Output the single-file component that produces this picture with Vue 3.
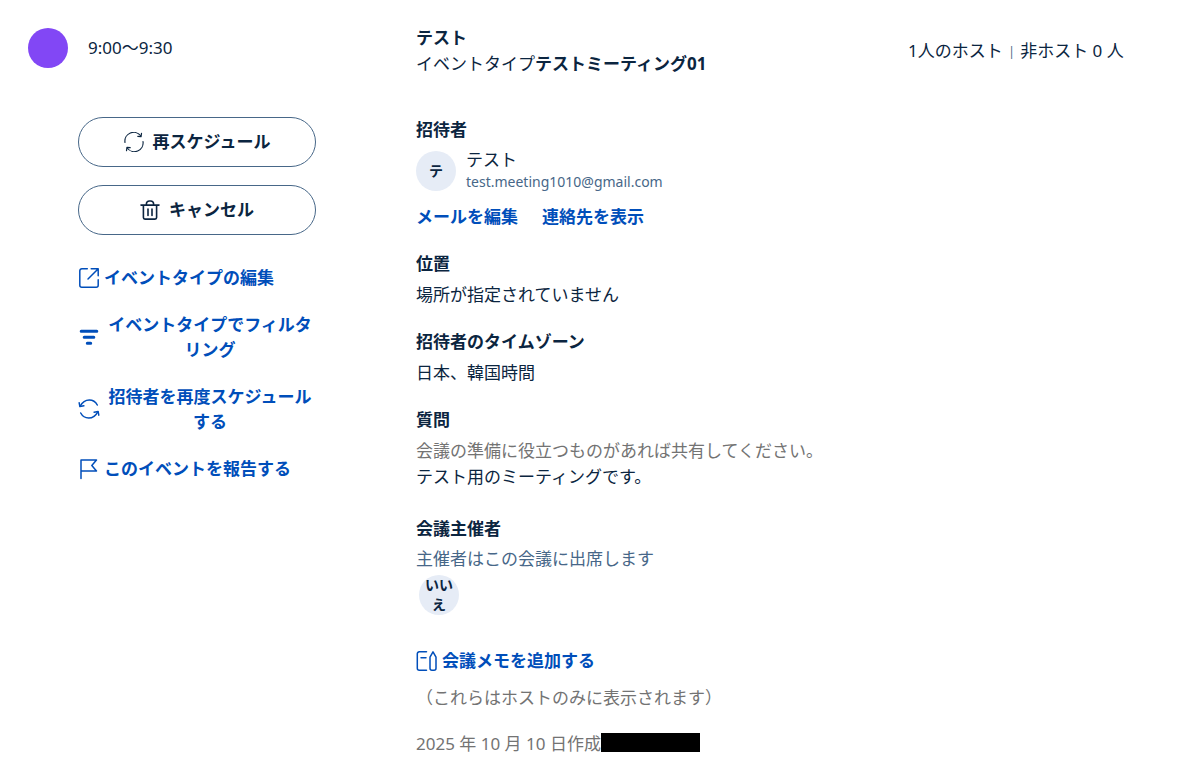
<script setup>
const sections = [
  { title: '位置', lines: [{ text: '場所が指定されていません' }] },
  { title: '招待者のタイムゾーン', lines: [{ text: '日本、韓国時間' }] },
  {
    title: '質問',
    lines: [
      { text: '会議の準備に役立つものがあれば共有してください。', muted: true },
      { text: 'テスト用のミーティングです。' },
    ],
  },
]
</script>

<template>
  <main class="event">
    <header class="grid summary">
      <div class="time">
        <span class="dot"></span>
        <time>9:00～9:30</time>
      </div>
      <div class="title">
        <strong>テスト</strong>
        <div>イベントタイプ<strong>テストミーティング01</strong></div>
      </div>
      <div class="hosts">1人のホスト <span class="bar">|</span> 非ホスト 0 人</div>
    </header>

    <div class="grid">
      <aside class="actions">
        <button class="pill" type="button">
          <svg class="icon-small" viewBox="0 0 20 20" aria-hidden="true">
            <path d="M1 10.500A8.800 8.800 0 0 1 16.800 4M19 9.500A8.800 8.800 0 0 1 3.200 16" />
            <path d="M17.500 1.400l-.5 3.200-3.200-.3M2.500 18.600l.5-3.200 3.200.3" />
          </svg>
          再スケジュール
        </button>
        <button class="pill" type="button">
          <svg class="icon-small trash" viewBox="0 0 20 20" aria-hidden="true">
            <path d="M1 5.1h18M3.4 5.1v12.400a1.600 1.600 0 0 0 1.600 1.600h10a1.600 1.600 0 0 0 1.600-1.600V5.100M6.400 5V3.800A3 3 0 0 1 9.400 1h1.200a3 3 0 0 1 3 2.800V5M8 9v6.500M12 9v6.500" />
          </svg>
          キャンセル
        </button>

        <div class="links">
          <button class="link" type="button">
            <svg viewBox="0 0 22 22" aria-hidden="true">
              <path d="M9.300 1.800H3.800a2 2 0 0 0-2 2v14.400a2 2 0 0 0 2 2h14.400a2 2 0 0 0 2-2v-5.500M10 12l10-10M13.200 1.800h7v7" />
            </svg>
            <span>イベントタイプの編集</span>
          </button>
          <button class="link" type="button">
            <svg class="filter" viewBox="0 0 22 22" aria-hidden="true">
              <path d="M3.200 5.300h15.600M6.200 11.300h9.600M9.300 17.300h3.400" />
            </svg>
            <span>イベントタイプでフィルタリング</span>
          </button>
          <button class="link" type="button">
            <svg viewBox="0 0 22 22" aria-hidden="true">
              <path d="M2.200 8.200C4.400 4 8 2 11.300 2c3.600 0 6.400 2 8 5M19.800 13.800C17.600 18 14 20 10.700 20c-3.600 0-6.400-2-8-5" />
              <path d="M1.200 4.800l.7 3.800 4-.8M20.800 17.200l-.7-3.800-4 .8" />
            </svg>
            <span>招待者を再度スケジュールする</span>
          </button>
          <button class="link" type="button">
            <svg viewBox="0 0 22 22" aria-hidden="true">
              <path d="M3 20.500V2h15.500l-4.700 5.500 4.700 5.500H3" />
            </svg>
            <span>このイベントを報告する</span>
          </button>
        </div>
      </aside>

      <div class="details">
        <section>
          <h2>招待者</h2>
          <div class="invitee">
            <span class="avatar">テ</span>
            <div>
              <div class="name">テスト</div>
              <div class="email">test.meeting1010@gmail.com</div>
            </div>
          </div>
          <div class="invitee-links">
            <button class="link" type="button">メールを編集</button>
            <button class="link" type="button">連絡先を表示</button>
          </div>
        </section>

        <section v-for="section in sections" :key="section.title">
          <h2>{{ section.title }}</h2>
          <div class="body">
            <p v-for="line in section.lines" :key="line.text" :class="{ muted: line.muted }">{{ line.text }}</p>
          </div>
        </section>

        <section class="organizer">
          <h2>会議主催者</h2>
          <p>主催者はこの会議に出席します</p>
          <span class="avatar">いいえ</span>
        </section>

        <section class="notes">
          <button class="link" type="button">
            <svg viewBox="0 0 22 22" aria-hidden="true">
              <path d="M10.500 1.800H3.300a2 2 0 0 0-2 2v14.400a2 2 0 0 0 2 2h7.200M5 7.700h5M14 7.200l3-5.400 3 5.400v11a2 2 0 0 1-2 2h-2a2 2 0 0 1-2-2z" />
            </svg>
            <span>会議メモを追加する</span>
          </button>
          <p class="muted">（これらはホストのみに表示されます）</p>
        </section>

        <p class="created muted">2025 年 10 月 10 日作成<span class="redacted"></span></p>
      </div>
    </div>
  </main>
</template>

<style>
body {
  margin: 0;
  background: #fff;
}
</style>

<style scoped>
.event {
  padding: 25px 28px;
  color: #0b2540;
  font-family: "Noto Sans", "Noto Sans CJK JP", sans-serif;
  font-size: 17px;
  line-height: 26px;
}
.grid {
  display: grid;
  grid-template-columns: 97fr 123fr 64fr;
}
.summary {
  margin-bottom: 40px;
}
.time {
  display: flex;
  align-items: center;
  align-self: start;
  gap: 20px;
  padding-top: 3px;
}
.dot {
  width: 40px;
  height: 40px;
  border-radius: 50%;
  background: #8247f5;
}
.hosts {
  padding-top: 13px;
  white-space: nowrap;
}
.bar {
  margin: 0 1px;
  color: #476788;
  font-size: 12px;
  line-height: 12px;
  vertical-align: 1px;
}
.actions {
  width: 238px;
  margin-left: 50px;
}
button {
  font: inherit;
  font-weight: 700;
  cursor: pointer;
}
svg {
  flex: none;
  width: 22px;
  height: 22px;
  fill: none;
  stroke: currentColor;
  stroke-width: 1.5;
  stroke-linecap: round;
  stroke-linejoin: round;
}
.pill {
  display: flex;
  align-items: center;
  justify-content: center;
  gap: 9px;
  width: 100%;
  height: 50px;
  margin-bottom: 18px;
  padding: 0;
  border: 1px solid #476788;
  border-radius: 25px;
  background: #fff;
  color: inherit;
}
.icon-small {
  width: 20px;
  height: 20px;
  stroke-width: 1.2;
}
.trash {
  stroke-width: 1.6;
}
.filter {
  stroke-width: 3;
}
.links {
  display: flex;
  flex-direction: column;
  align-items: flex-start;
  gap: 22px;
  padding-top: 12px;
  line-height: 25px;
}
.link {
  display: flex;
  align-items: center;
  gap: 4px;
  padding: 0;
  border: 0;
  background: none;
  color: #004eba;
}
h2,
p {
  margin: 0;
  font-size: 17px;
}
section {
  margin-bottom: 21px;
}
.invitee {
  display: flex;
  align-items: center;
  gap: 10px;
  margin: 8px 0 13px;
}
.name {
  line-height: 22px;
}
.email {
  color: #476788;
  font-size: 14px;
  line-height: 22px;
}
.invitee > div {
  margin: -2px 0;
}
.avatar {
  display: flex;
  align-items: center;
  justify-content: center;
  width: 40px;
  height: 40px;
  border-radius: 50%;
  background: #e6ecf6;
  font-size: 14px;
  font-weight: 700;
  line-height: 20px;
  text-align: center;
}
.invitee-links {
  display: flex;
  gap: 24px;
}
.body {
  padding-top: 5px;
}
.muted {
  color: #737373;
}
.organizer {
  padding-top: 5px;
  margin-bottom: 33px;
}
.organizer p {
  margin: 4px 0 3px;
  color: #476788;
}
.organizer .avatar {
  box-sizing: border-box;
  margin-left: 3px;
  padding: 0 5px;
}
.notes {
  margin-bottom: 20px;
}
.notes p {
  margin-top: 11px;
}
.created {
  display: flex;
  align-items: flex-start;
}
.redacted {
  width: 99px;
  height: 19px;
  margin-top: 2px;
  background: #000;
}
</style>
